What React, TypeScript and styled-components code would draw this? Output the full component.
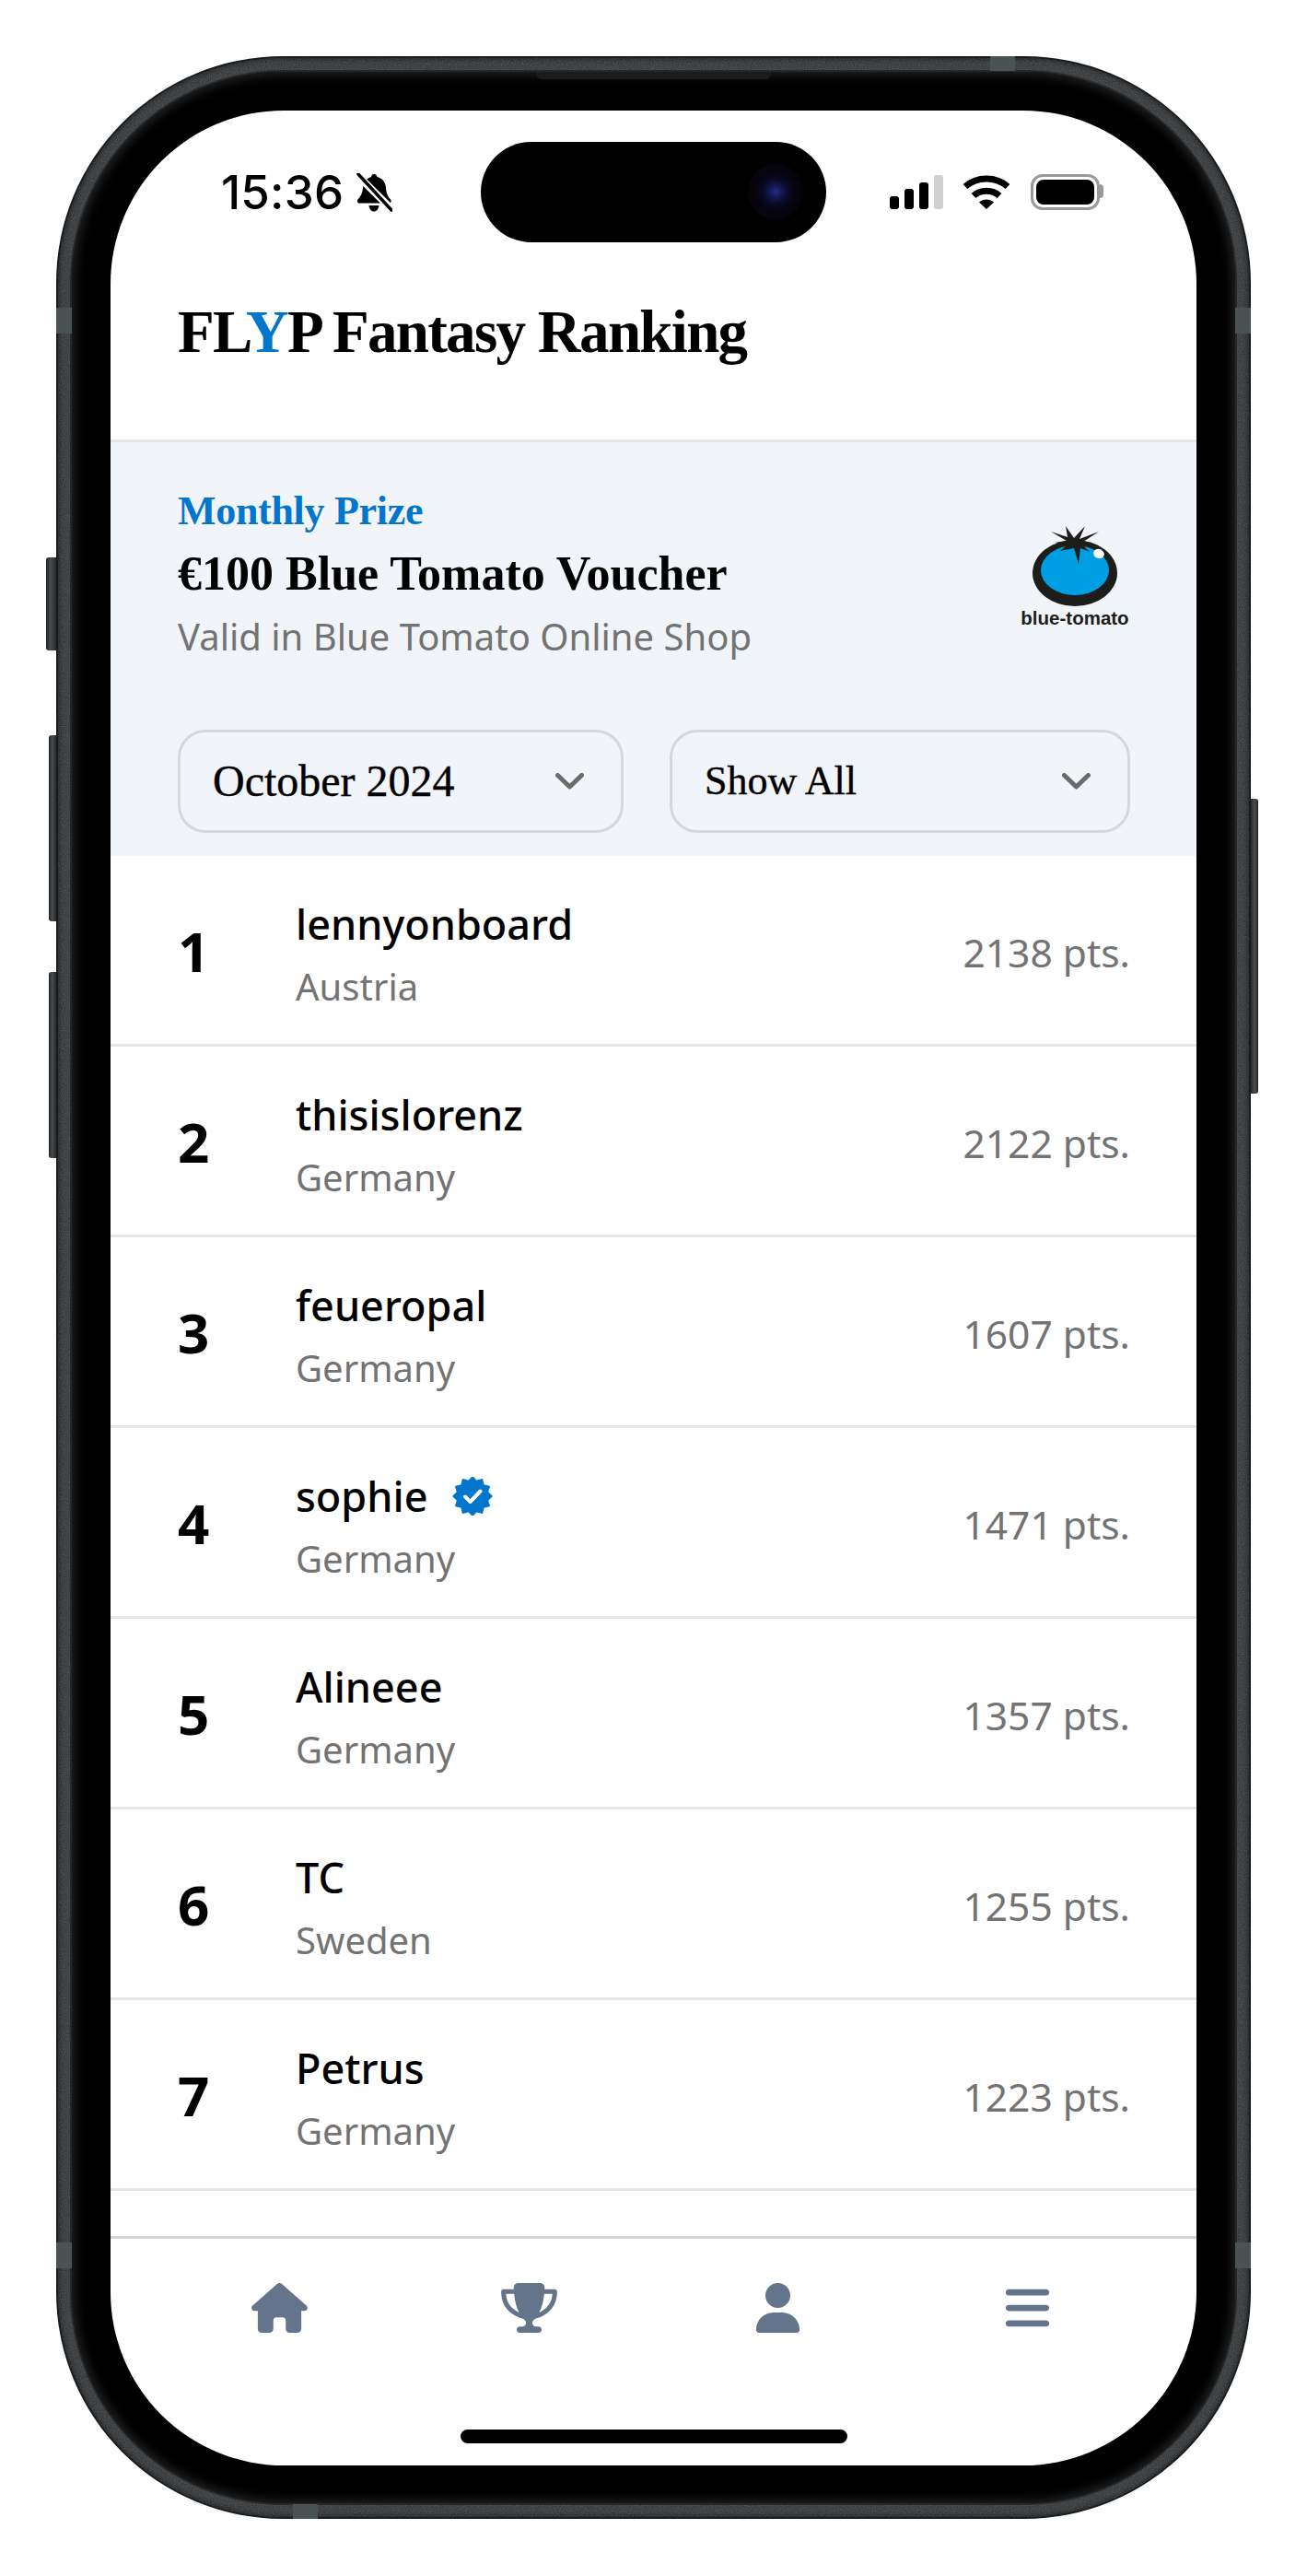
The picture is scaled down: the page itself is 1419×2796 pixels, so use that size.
import React from "react";
import styled, { createGlobalStyle } from "styled-components";
import { FaHouse, FaTrophy, FaUser, FaBars } from "react-icons/fa6";

const Global = createGlobalStyle`
  html, body { margin: 0; padding: 0; background: #fefefe; }
  * { box-sizing: border-box; }
`;

const serif = `"Liberation Serif", "Times New Roman", serif`;
const sans = `"Noto Sans", "Open Sans", sans-serif`;

const Page = styled.div`
  width: 1419px;
  height: 2796px;
  padding: 61px;
  background: #fefefe;
  overflow: hidden;
`;

const Frame = styled.div`
  position: relative;
  width: 1297px;
  height: 2673px;
  padding: 2px;
  border-radius: 246px;
  background: #191b1c;
`;

const Band = styled.div`
  position: relative;
  width: 100%;
  height: 100%;
  padding: 13px;
  border-radius: 244px;
  background: #36393b;
  box-shadow: inset 0 0 4px 2px #1f2123;
  overflow: hidden;
`;

const Grain = styled.svg`
  position: absolute;
  inset: 0;
  width: 100%;
  height: 100%;
  opacity: 0.16;
`;

const Seam = styled.div`
  position: relative;
  width: 100%;
  height: 100%;
  padding: 2px;
  border-radius: 231px;
  background: #262829;
`;

const Bezel = styled.div`
  width: 100%;
  height: 100%;
  padding: 42px 42px 41px;
  border-radius: 229px;
  background: #000;
  box-shadow: inset 0 0 12px 3px #242424;
`;

const Screen = styled.div`
  display: flex;
  flex-direction: column;
  width: 1179px;
  height: 2556px;
  border-radius: 188px;
  background: #fff;
  overflow: hidden;
`;

const SideButton = styled.span<{ $side: "left" | "right"; $top: number; $height: number; $wide?: boolean }>`
  position: absolute;
  top: ${(p) => p.$top}px;
  ${(p) => (p.$side === "left" ? "right: 100%;" : "left: 100%;")}
  width: ${(p) => (p.$wide ? 11 : 8)}px;
  height: ${(p) => p.$height}px;
  border-radius: ${(p) => (p.$side === "left" ? "3px 0 0 3px" : "0 3px 3px 0")};
  background: linear-gradient(
    ${(p) => (p.$side === "left" ? "90deg" : "270deg")},
    #1f2021 0,
    #4a4d4f 45%,
    #26282a 100%
  );
`;

const Antenna = styled.span<{ $x?: number; $y?: number; $edge: "top" | "bottom" | "left" | "right" }>`
  position: absolute;
  z-index: 1;
  background: #4a5253;
  ${(p) =>
    p.$edge === "top" || p.$edge === "bottom"
      ? `left: ${p.$x}px; width: 27px; height: 16px; ${p.$edge}: 0;`
      : `top: ${p.$y}px; height: 28px; width: 17px; ${p.$edge}: 0;`}
`;

const Speaker = styled.span`
  position: absolute;
  z-index: 1;
  top: 17px;
  left: 521px;
  width: 255px;
  height: 8px;
  border-radius: 0 0 6px 6px;
  background: #1c1c1c;
`;

const StatusBar = styled.header`
  display: grid;
  grid-template-columns: 1fr 375px 1fr;
  align-items: center;
  height: 143px;
  padding-top: 34px;
`;

const StatusLeft = styled.div`
  display: flex;
  align-items: center;
  gap: 14px;
  padding-left: 120px;
`;

const Time = styled.span`
  font: 500 51px/1 "Inter", sans-serif;
  letter-spacing: 0.2px;
  color: #000;
`;

const Island = styled.div`
  position: relative;
  height: 109px;
  border-radius: 55px;
  background: #000;
`;

const Lens = styled.span`
  position: absolute;
  top: 24px;
  right: 25px;
  width: 60px;
  height: 60px;
  border-radius: 50%;
  background: radial-gradient(
    circle at center,
    #22308a 0,
    #171a55 14%,
    #0b0a28 30%,
    #07040f 50%,
    #040208 100%
  );
`;

const StatusRight = styled.div`
  display: flex;
  align-items: center;
  padding-left: 69px;
  gap: 21px;
`;

const Signal = styled.div`
  display: flex;
  align-items: flex-end;
  gap: 6px;
  height: 37px;
`;

const SignalBar = styled.span<{ $h: number; $off?: boolean }>`
  width: 10px;
  height: ${(p) => p.$h}px;
  border-radius: 3px;
  background: ${(p) => (p.$off ? "#cfcfcf" : "#000")};
`;

const Battery = styled.div`
  position: relative;
  width: 75px;
  height: 39px;
  margin-left: 1px;
  padding: 3px;
  border: 3px solid #999;
  border-radius: 13px;
  &::after {
    content: "";
    position: absolute;
    top: 8px;
    left: calc(100% + 3px);
    width: 4px;
    height: 15px;
    border-radius: 0 8px 8px 0;
    background: #999;
  }
`;

const BatteryFill = styled.span`
  display: block;
  height: 100%;
  border-radius: 8px;
  background: #000;
`;

const Header = styled.div`
  height: 217px;
  padding: 54px 73px 0;
  border-bottom: 3px solid #e6e6e6;
`;

const Title = styled.h1`
  margin: 0;
  font: 700 65px/86px ${serif};
  letter-spacing: -1.7px;
  color: #000;
`;

const Accent = styled.span`
  color: #0176cc;
`;

const Prize = styled.section`
  padding: 41px 72px 25px 73px;
  background: #f1f4f9;
`;

const PrizeTop = styled.div`
  display: flex;
  justify-content: space-between;
  align-items: flex-start;
`;

const PrizeLabel = styled.div`
  font: 700 44px/68px ${serif};
  letter-spacing: -0.3px;
  color: #0176cc;
`;

const PrizeName = styled.div`
  font: 700 52px/68px ${serif};
  color: #000;
`;

const PrizeNote = styled.div`
  font: 400 40px/68px ${sans};
  color: #737373;
`;

const Logo = styled.div`
  display: flex;
  flex-direction: column;
  align-items: center;
  width: 120px;
  margin-top: 49px;
`;

const LogoText = styled.span`
  margin-top: 3px;
  font: 700 20.5px/20px "Liberation Sans", Arial, sans-serif;
  white-space: nowrap;
  color: #1d1d1b;
`;

const Filters = styled.div`
  display: grid;
  grid-template-columns: 484px 500px;
  justify-content: space-between;
  margin-top: 67px;
`;

const Select = styled.div<{ $size: number }>`
  display: flex;
  align-items: center;
  justify-content: space-between;
  height: 112px;
  padding: 0 40px 0 35px;
  border: 3px solid #d5d7db;
  border-radius: 30px;
  font: 400 ${(p) => p.$size}px/1 ${serif};
  -webkit-text-stroke: 0.4px #000;
  color: #000;
`;

const List = styled.div`
  flex: 1;
  min-height: 0;
  overflow: hidden;
`;

const Row = styled.div`
  display: grid;
  grid-template-columns: 128px 1fr auto;
  align-items: center;
  height: 207px;
  padding: 0 72px 0 73px;
  border-bottom: 3px solid #e6e6e6;
`;

const Rank = styled.div`
  padding-top: 2px;
  font: 700 60px/1 ${sans};
  color: #000;
`;

const Who = styled.div`
  display: flex;
  flex-direction: column;
  padding-top: 12px;
`;

const Name = styled.div`
  display: flex;
  align-items: center;
  gap: 27px;
  height: 68px;
  font: 500 45px/68px ${sans};
  color: #000;
`;

const Country = styled.div`
  height: 68px;
  font: 400 40px/68px ${sans};
  color: #737373;
`;

const Points = styled.div`
  padding-top: 6px;
  font: 400 42.5px/1 ${sans};
  color: #737373;
`;

const TabBar = styled.nav`
  position: relative;
  display: grid;
  grid-template-columns: repeat(4, 1fr);
  justify-items: center;
  align-content: start;
  height: 249px;
  padding: 48px 48px 0;
  border-top: 3px solid #d4d4d4;
  color: #64748b;
  line-height: 0;
  svg {
    width: 61px;
    height: 54px;
  }
`;

const HomeBar = styled.span`
  position: absolute;
  left: 380px;
  bottom: 24px;
  width: 420px;
  height: 15px;
  border-radius: 8px;
  background: #000;
`;

const starPoints = (): string => {
  const pts: string[] = [];
  for (let i = 0; i < 24; i++) {
    const r = i % 2 === 0 ? 21 : 17;
    const a = (Math.PI * 2 * i) / 24;
    pts.push(`${(22 + r * Math.sin(a)).toFixed(2)},${(21 - r * Math.cos(a)).toFixed(2)}`);
  }
  return pts.join(" ");
};

const Verified = () => (
  <svg width="44" height="42" viewBox="0 0 44 42" aria-hidden="true">
    <polygon points={starPoints()} fill="#0176cc" stroke="#0176cc" strokeWidth="1.5" strokeLinejoin="round" />
    <path d="M14 21.5l5.6 5.5L30.5 15.5" fill="none" stroke="#fff" strokeWidth="4" strokeLinecap="round" strokeLinejoin="round" />
  </svg>
);

const Chevron = () => (
  <svg width="31" height="18" viewBox="0 0 31 18" aria-hidden="true">
    <path d="M2.5 2.5L15.5 15L28.5 2.5" fill="none" stroke="#6b6b6b" strokeWidth="5" strokeLinecap="round" strokeLinejoin="round" />
  </svg>
);

const BellSlash = () => (
  <svg width="39" height="42" viewBox="0 0 39 42" aria-hidden="true">
    <path d="M19 1c2 0 3 1 3.500 3 6 1.500 9 6 9.500 12 .4 6 2 9 5 12.500 1.300 1.500.5 4-1.500 4H3c-2 0-2.800-2.500-1.500-4C4.500 25 6.500 22 7 16c.5-6 3.500-10.500 9-12 .5-2 1-3 3-3z" fill="#000" />
    <path d="M13.500 35h11c-.5 4-2.700 6.500-5.500 6.500s-5-2.500-5.500-6.500z" fill="#000" />
    <path d="M1 2L38 39" stroke="#fff" strokeWidth="8" />
    <path d="M2 1L38 40" stroke="#000" strokeWidth="3.500" strokeLinecap="round" />
  </svg>
);

const Wifi = () => (
  <svg width="52" height="37" viewBox="0 0 52 37" aria-hidden="true">
    <path d="M3 12.500C15.500 1 36.500 1 49 12.500" fill="none" stroke="#000" strokeWidth="7" />
    <path d="M12 22.500C19.500 15.500 32.500 15.500 40 22.500" fill="none" stroke="#000" strokeWidth="7" />
    <path d="M26 37L18 29.500C22.500 25.500 29.500 25.500 34 29.500z" fill="#000" />
  </svg>
);

const TomatoLogo = () => (
  <svg width="92" height="88" viewBox="0 0 92 88" aria-hidden="true">
    <ellipse cx="46" cy="52" rx="46" ry="36" fill="#1d1d1b" />
    <ellipse cx="46" cy="49" rx="37" ry="27" fill="#009fe3" />
    <polygon
      fill="#1d1d1b"
      points="36,1 45,14 57,1 51,15 72,7 55,18 67,23 56,23 62,29 52,25 50,42 45,25 30,28 38,21 24,19 37,17 20,7 38,13"
    />
    <ellipse cx="72" cy="31" rx="6" ry="5" fill="#fff" transform="rotate(28 72 31)" />
  </svg>
);

const people = [
  { name: "lennyonboard", country: "Austria", pts: 2138 },
  { name: "thisislorenz", country: "Germany", pts: 2122 },
  { name: "feueropal", country: "Germany", pts: 1607 },
  { name: "sophie", country: "Germany", pts: 1471, verified: true },
  { name: "Alineee", country: "Germany", pts: 1357 },
  { name: "TC", country: "Sweden", pts: 1255 },
  { name: "Petrus", country: "Germany", pts: 1223 },
];

export default function App() {
  return (
    <Page>
      <Global />
      <Frame>
        <SideButton $side="left" $top={544} $height={101} $wide />
        <SideButton $side="left" $top={737} $height={202} />
        <SideButton $side="left" $top={994} $height={202} />
        <SideButton $side="right" $top={806} $height={320} />
        <Antenna $edge="top" $x={1014} />
        <Antenna $edge="bottom" $x={257} />
        <Antenna $edge="left" $y={273} />
        <Antenna $edge="right" $y={273} />
        <Antenna $edge="left" $y={2373} />
        <Antenna $edge="right" $y={2373} />
        <Speaker />
        <Band>
          <Grain aria-hidden="true">
            <filter id="grain">
              <feTurbulence type="fractalNoise" baseFrequency="0.9" numOctaves="2" seed="4" />
              <feColorMatrix values="0 0 0 0 1  0 0 0 0 1  0 0 0 0 1  1.6 0 0 0 -0.45" />
            </filter>
            <rect width="100%" height="100%" filter="url(#grain)" />
          </Grain>
          <Seam>
            <Bezel>
              <Screen>
                <StatusBar>
                  <StatusLeft>
                    <Time>15:36</Time>
                    <BellSlash />
                  </StatusLeft>
                  <Island>
                    <Lens />
                  </Island>
                  <StatusRight>
                    <Signal>
                      <SignalBar $h={14} />
                      <SignalBar $h={22} />
                      <SignalBar $h={29} />
                      <SignalBar $h={37} $off />
                    </Signal>
                    <Wifi />
                    <Battery>
                      <BatteryFill />
                    </Battery>
                  </StatusRight>
                </StatusBar>
                <Header>
                  <Title>
                    FL<Accent>Y</Accent>P Fantasy Ranking
                  </Title>
                </Header>
                <Prize>
                  <PrizeTop>
                    <div>
                      <PrizeLabel>Monthly Prize</PrizeLabel>
                      <PrizeName>€100 Blue Tomato Voucher</PrizeName>
                      <PrizeNote>Valid in Blue Tomato Online Shop</PrizeNote>
                    </div>
                    <Logo>
                      <TomatoLogo />
                      <LogoText>blue-tomato</LogoText>
                    </Logo>
                  </PrizeTop>
                  <Filters>
                    <Select $size={48}>
                      October 2024
                      <Chevron />
                    </Select>
                    <Select $size={44}>
                      Show All
                      <Chevron />
                    </Select>
                  </Filters>
                </Prize>
                <List>
                  {people.map((p, i) => (
                    <Row key={p.name}>
                      <Rank>{i + 1}</Rank>
                      <Who>
                        <Name>
                          {p.name}
                          {p.verified && <Verified />}
                        </Name>
                        <Country>{p.country}</Country>
                      </Who>
                      <Points>{p.pts} pts.</Points>
                    </Row>
                  ))}
                </List>
                <TabBar>
                  <FaHouse />
                  <FaTrophy />
                  <FaUser />
                  <FaBars />
                  <HomeBar />
                </TabBar>
              </Screen>
            </Bezel>
          </Seam>
        </Band>
      </Frame>
    </Page>
  );
}
